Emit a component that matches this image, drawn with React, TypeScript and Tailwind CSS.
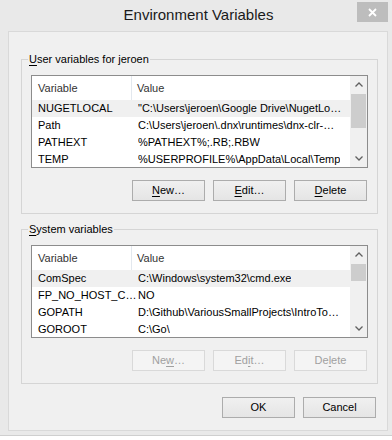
import React from 'react';

type Row = { name: string; value: string };

const userVars: Row[] = [
  { name: 'NUGETLOCAL', value: '"C:\\Users\\jeroen\\Google Drive\\NugetLo…' },
  { name: 'Path', value: 'C:\\Users\\jeroen\\.dnx\\runtimes\\dnx-clr-…' },
  { name: 'PATHEXT', value: '%PATHEXT%;.RB;.RBW' },
  { name: 'TEMP', value: '%USERPROFILE%\\AppData\\Local\\Temp' },
];

const systemVars: Row[] = [
  { name: 'ComSpec', value: 'C:\\Windows\\system32\\cmd.exe' },
  { name: 'FP_NO_HOST_C…', value: 'NO' },
  { name: 'GOPATH', value: 'D:\\Github\\VariousSmallProjects\\IntroTo…' },
  { name: 'GOROOT', value: 'C:\\Go\\' },
];

function Chevron({ up }: { up?: boolean }) {
  return (
    <svg width="8" height="5" viewBox="0 0 8 5" className="block">
      <path d={up ? 'M0.5 4.5 L4 1 L7.5 4.5' : 'M0.5 0.5 L4 4 L7.5 0.5'} fill="none" stroke="#606060" strokeWidth="1.3" />
    </svg>
  );
}

function Scrollbar({ thumbTop, thumbH }: { thumbTop: number; thumbH: number }) {
  return (
    <div className="w-[17px] shrink-0 bg-[#f0f0f0] flex flex-col">
      <div className="h-[17px] flex items-center justify-center"><Chevron up /></div>
      <div className="flex-1 flex flex-col items-center">
        <div className="w-[15px] bg-[#cdcdcd]" style={{ marginTop: thumbTop, height: thumbH }} />
      </div>
      <div className="h-[17px] flex items-center justify-center"><Chevron /></div>
    </div>
  );
}

function VarList({ rows, thumbTop, thumbH }: { rows: Row[]; thumbTop: number; thumbH: number }) {
  return (
    <div className="h-[93px] border border-[#8c8c8c] bg-white flex overflow-hidden">
      <div className="flex-1 min-w-0">
        <div className="h-[24px] flex items-center text-[#333]">
          <div className="w-[100px] h-full pl-[6px] flex items-center border-r border-[#e3e8ee]">Variable</div>
          <div className="pl-[5px]">Value</div>
        </div>
        {rows.map((r, i) => (
          <div key={r.name} className={`h-[17px] flex items-center whitespace-nowrap ${i === 0 ? 'bg-[#f0f0f0]' : ''}`}>
            <div className="w-[106px] pl-[6px] shrink-0 overflow-hidden">{r.name}</div>
            <div className="overflow-hidden">{r.value}</div>
          </div>
        ))}
      </div>
      <Scrollbar thumbTop={thumbTop} thumbH={thumbH} />
    </div>
  );
}

function Btn({ pre = '', ul, post = '', disabled }: { pre?: string; ul: string; post?: string; disabled?: boolean }) {
  return (
    <div
      className={`w-[73px] h-[21px] flex items-center justify-center border ${
        disabled ? 'border-[#d9d9d9] bg-[#f4f4f4] text-[#a0a0a0]' : 'border-[#acacac] bg-linear-to-b from-[#f0f0f0] to-[#e5e5e5] text-black'
      }`}
    >
      <span>
        {pre}
        <span className="underline underline-offset-[2px]">{ul}</span>
        {post}
      </span>
    </div>
  );
}

function Group({ ul, label, rows, thumbTop, thumbH, disabled, className }: {
  ul: string; label: string; rows: Row[]; thumbTop: number; thumbH: number; disabled?: boolean; className?: string;
}) {
  return (
    <fieldset className={`ml-[12px] w-[357px] border border-[#d5d5d5] ${className || ''}`}>
      <legend className="ml-[6px] px-[1px] leading-[15px]">
        <span className="underline underline-offset-[2px]">{ul}</span>{label}
      </legend>
      <div className="px-[9px] pt-[8px] pb-[12px]">
        <VarList rows={rows} thumbTop={thumbTop} thumbH={thumbH} />
        <div className="mt-[12px] flex justify-end gap-[8px] pr-[1px]">
          {disabled ? (
            <>
              <Btn pre="Ne" ul="w" post="…" disabled />
              <Btn pre="Ed" ul="i" post="t…" disabled />
              <Btn pre="De" ul="l" post="ete" disabled />
            </>
          ) : (
            <>
              <Btn ul="N" post="ew…" />
              <Btn ul="E" post="dit…" />
              <Btn ul="D" post="elete" />
            </>
          )}
        </div>
      </div>
    </fieldset>
  );
}

export default function App() {
  return (
    <div className="w-[392px] h-[440px] bg-[#e9e9e9] flex flex-col overflow-hidden text-[11px] text-black font-['Liberation_Sans',Arial,sans-serif]">
      <div className="h-[31px] shrink-0 relative flex items-center justify-center pl-[5px]">
        <span className="text-[15px] text-[#1a1a1a]">Environment Variables</span>
        <div className="absolute right-[4px] top-[2px] w-[31px] h-[20px] bg-[#bdbdbd] flex items-center justify-center">
          <svg width="9" height="9" viewBox="0 0 9 9">
            <path d="M1 1 L8 8 M8 1 L1 8" stroke="white" strokeWidth="1.8" />
          </svg>
        </div>
      </div>
      <div className="ml-[8px] w-[380px] h-[400px] shrink-0 border border-[#d9d9d9] bg-[#f0f0f0] flex flex-col">
        <Group className="mt-[20px]" ul="U" label="ser variables for jeroen" rows={userVars} thumbTop={1} thumbH={34} />
        <Group className="mt-[8px]" ul="S" label="ystem variables" rows={systemVars} thumbTop={1} thumbH={17} disabled />
        <div className="mt-[13px] flex justify-end gap-[8px] pr-[11px]">
          <Btn ul="" pre="OK" />
          <Btn ul="" pre="Cancel" />
        </div>
      </div>
      <div className="h-[4px] shrink-0" />
      <div className="flex-1 bg-white border-t border-[#cfcfcf]" />
    </div>
  );
}
